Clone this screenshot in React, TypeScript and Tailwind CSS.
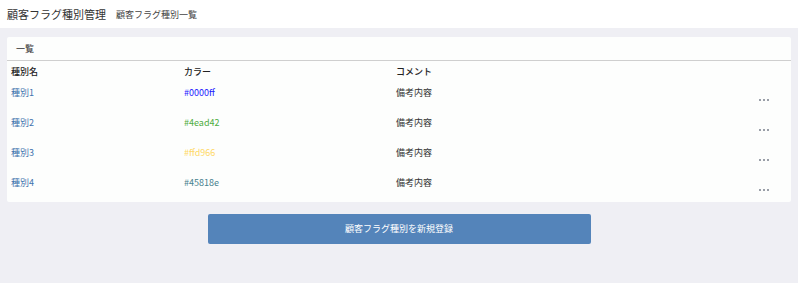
const rows = [
  { name: '種別1', color: '#0000ff', text: 'text-[#1a1aff]' },
  { name: '種別2', color: '#4ead42', text: 'text-[#4ead42]' },
  { name: '種別3', color: '#ffd966', text: 'text-[#ffd966]' },
  { name: '種別4', color: '#45818e', text: 'text-[#45818e]' },
]

const font = "font-['Noto_Sans_CJK_JP','Noto_Sans',sans-serif]"

export default function App() {
  return (
    <div className={`${font} w-[798px] h-[283px] bg-[#efeff4] text-[#333]`}>
      {/* ヘッダー */}
      <div className="h-[28px] bg-white flex items-center gap-[10px] px-[7px]">
        <h1 className="text-[11px] leading-none text-[#333]">顧客フラグ種別管理</h1>
        <p className="text-[9px] leading-none text-[#444]">顧客フラグ種別一覧</p>
      </div>

      <div className="px-[7px] pt-[9px]">
        <div className="bg-[#fdfefd] rounded-[2px]">
          <div className="h-[24px] flex items-center px-[9px] border-b border-[#cfcfcf] text-[9px]">
            一覧
          </div>

          {/* 列見出し */}
          <div className="grid grid-cols-[173px_212px_1fr_28px] px-[4px] h-[21px] items-center text-[9px] font-medium text-[#222]">
            <span>種別名</span>
            <span>カラー</span>
            <span>コメント</span>
            <span />
          </div>

          {rows.map((r) => (
            <div
              key={r.name}
              className="grid grid-cols-[173px_212px_1fr_28px] px-[4px] h-[30px] text-[9px]"
            >
              <span className="text-[#3f73ad] pt-[4px]">{r.name}</span>
              <span className={`${r.text} pt-[4px]`}>{r.color}</span>
              <span className="text-[#333] pt-[4px]">備考内容</span>
              <span className="flex items-end pb-[11px] gap-[2px]">
                <span className="w-[2px] h-[2px] bg-[#9a9fa8]" />
                <span className="w-[2px] h-[2px] bg-[#9a9fa8]" />
                <span className="w-[2px] h-[2px] bg-[#9a9fa8]" />
              </span>
            </div>
          ))}
        </div>
      </div>

      <div className="flex justify-center pt-[12px]">
        <button className="w-[383px] h-[30px] bg-[#5484ba] rounded-[2px] text-white text-[9px]">
          顧客フラグ種別を新規登録
        </button>
      </div>
    </div>
  )
}
